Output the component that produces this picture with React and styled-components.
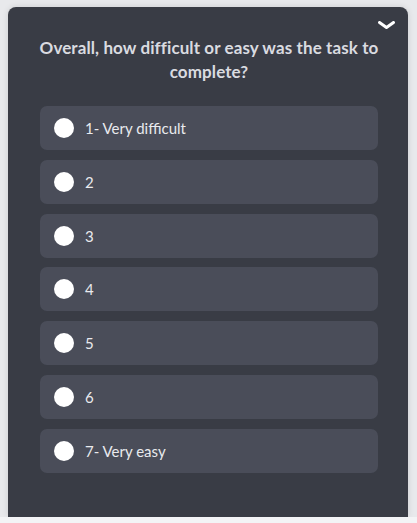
import styled, { createGlobalStyle } from "styled-components";

const Global = createGlobalStyle`
  html, body {
    margin: 0;
    padding: 0;
    background: #f3f4f6;
  }
  body {
    font-family: "Lato", "Noto Sans", sans-serif;
  }
`;

const Page = styled.div`
  padding: 7px 9px 0 8px;
  height: 517px;
  background: #e8e9ec;
  box-sizing: border-box;
  display: flex;
  flex-direction: column;
`;

const Panel = styled.div`
  background: #393c45;
  border-radius: 8px 8px 0 0;
  flex: 1;
  box-shadow: 0 0 6px rgba(0, 0, 0, 0.12);
  display: flex;
  flex-direction: column;
  padding: 14px 30px 0 32px;
  box-sizing: border-box;
`;

const Toggle = styled.div`
  display: flex;
  justify-content: flex-end;
  height: 10px;
  margin-right: -17px;
`;

const Title = styled.h2`
  margin: 5px -6px 0;
  color: #dadbe0;
  font-size: 17px;
  font-weight: 700;
  letter-spacing: 0.1px;
  line-height: 24px;
  text-align: center;
`;

const Options = styled.div`
  margin-top: 22px;
  display: flex;
  flex-direction: column;
  gap: 9.8px;
`;

const Option = styled.label`
  display: flex;
  align-items: center;
  gap: 11px;
  height: 44px;
  padding: 0 14px;
  background: #4a4d59;
  border-radius: 7px;
  color: #e9eaee;
  font-size: 15px;
  cursor: pointer;
`;

const Radio = styled.span`
  width: 20px;
  height: 20px;
  border-radius: 50%;
  background: #ffffff;
  flex-shrink: 0;
`;

const labels = ["1- Very difficult", "2", "3", "4", "5", "6", "7- Very easy"];

export default function App() {
  return (
    <>
      <Global />
      <Page>
        <Panel>
          <Toggle>
            <svg width="17" height="9" viewBox="0 0 17 9">
              <path d="M1.5 1.5 L8.5 6.5 L15.5 1.5" fill="none" stroke="#ffffff" strokeWidth="3" strokeLinecap="round" strokeLinejoin="round" />
            </svg>
          </Toggle>
          <Title>Overall, how difficult or easy was the task to complete?</Title>
          <Options>
            {labels.map((l) => (
              <Option key={l}>
                <Radio />
                {l}
              </Option>
            ))}
          </Options>
        </Panel>
      </Page>
    </>
  );
}
